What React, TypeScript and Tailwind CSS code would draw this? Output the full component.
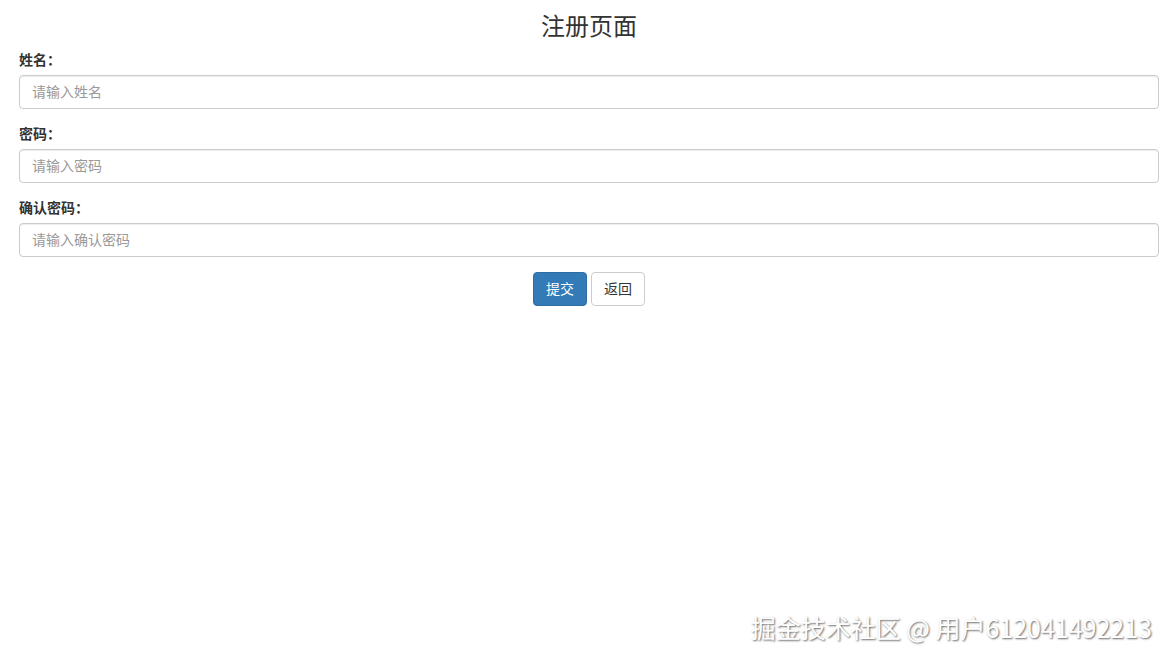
const fields = [
  { label: "姓名：", placeholder: "请输入姓名", type: "text" },
  { label: "密码：", placeholder: "请输入密码", type: "password" },
  { label: "确认密码：", placeholder: "请输入确认密码", type: "password" },
];

export default function App() {
  return (
    <div
      className="relative flow-root h-[662px] w-full bg-white text-[#333]"
      style={{ fontFamily: '"Liberation Sans", "Noto Sans CJK SC", sans-serif' }}
    >
      <div className="pl-[19px] pr-[13px]">
        <h2 className="mt-[13px] mb-[10px] text-center text-[24px] leading-[27px] text-[#333]">注册页面</h2>
        <form className="flex flex-col">
          {fields.map((f) => (
            <div key={f.label} className="mb-[15px] flex flex-col">
              <label className="mb-[5px] text-[14px] font-bold leading-[20px] text-[#333]">{f.label}</label>
              <input
                type={f.type}
                placeholder={f.placeholder}
                className="h-[34px] w-full rounded-[4px] border border-[#ccc] px-3 text-[14px] text-[#555] shadow-[inset_0_1px_1px_rgba(0,0,0,0.075)] outline-none placeholder:text-[#999]"
              />
            </div>
          ))}
          <div className="flex justify-center gap-[4px]">
            <button
              type="button"
              className="h-[34px] w-[54px] rounded-[4px] border border-[#2e6da4] bg-[#337ab7] text-[14px] text-white"
            >
              提交
            </button>
            <button
              type="button"
              className="h-[34px] w-[54px] rounded-[4px] border border-[#ccc] bg-white text-[14px] text-[#333]"
            >
              返回
            </button>
          </div>
        </form>
      </div>
      <div
        className="absolute bottom-[20px] right-[20px] text-[25px] leading-[30px] text-white [text-shadow:1px_1px_2px_rgba(0,0,0,0.6)]"
        style={{ fontFamily: '"Noto Sans CJK SC", sans-serif' }}
      >
        掘金技术社区 @ 用户612041492213
      </div>
    </div>
  );
}
